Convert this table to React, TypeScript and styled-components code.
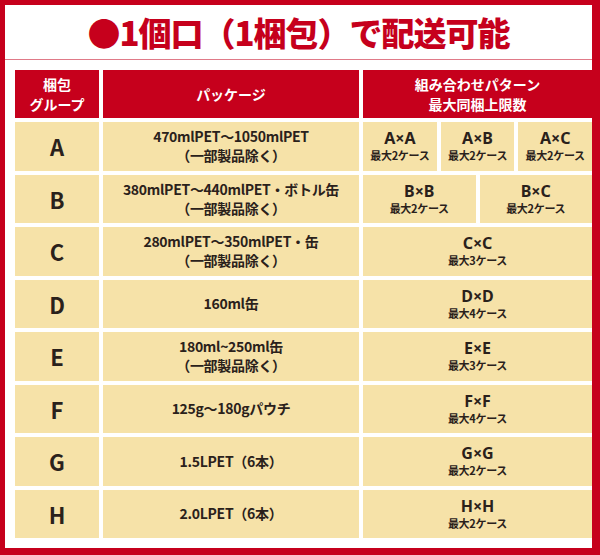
import React from 'react';
import styled, { createGlobalStyle } from 'styled-components';

interface Pattern {
  pair: string;
  limit: string;
}

interface Row {
  group: string;
  lines: string[];
  patterns: Pattern[];
}

const RED = '#c6001c';
const BEIGE = '#f6e2a8';
const INK = '#2a211b';

const rows: Row[] = [
  {
    group: 'A',
    lines: ['470mlPET〜1050mlPET', '（一部製品除く）'],
    patterns: [
      { pair: 'A×A', limit: '最大2ケース' },
      { pair: 'A×B', limit: '最大2ケース' },
      { pair: 'A×C', limit: '最大2ケース' },
    ],
  },
  {
    group: 'B',
    lines: ['380mlPET〜440mlPET・ボトル缶', '（一部製品除く）'],
    patterns: [
      { pair: 'B×B', limit: '最大2ケース' },
      { pair: 'B×C', limit: '最大2ケース' },
    ],
  },
  {
    group: 'C',
    lines: ['280mlPET〜350mlPET・缶', '（一部製品除く）'],
    patterns: [{ pair: 'C×C', limit: '最大3ケース' }],
  },
  { group: 'D', lines: ['160ml缶'], patterns: [{ pair: 'D×D', limit: '最大4ケース' }] },
  {
    group: 'E',
    lines: ['180ml~250ml缶', '（一部製品除く）'],
    patterns: [{ pair: 'E×E', limit: '最大3ケース' }],
  },
  { group: 'F', lines: ['125g〜180gパウチ'], patterns: [{ pair: 'F×F', limit: '最大4ケース' }] },
  { group: 'G', lines: ['1.5LPET（6本）'], patterns: [{ pair: 'G×G', limit: '最大2ケース' }] },
  { group: 'H', lines: ['2.0LPET（6本）'], patterns: [{ pair: 'H×H', limit: '最大2ケース' }] },
];

const GlobalStyle = createGlobalStyle`
  html, body {
    margin: 0;
    padding: 0;
    background: #ffffff;
  }
  body {
    font-family: "Noto Sans CJK JP", "Noto Sans", sans-serif;
  }
`;

const Frame = styled.div`
  box-sizing: border-box;
  width: 600px;
  height: 555px;
  border-style: solid;
  border-color: ${RED};
  border-width: 5px 8px 7px 5px;
  background: #ffffff;
  display: flex;
  flex-direction: column;
`;

const TitleBar = styled.div`
  height: 54px;
  border-bottom: 1px solid #e07a88;
  display: flex;
  align-items: center;
  justify-content: center;
`;

const Title = styled.h1`
  margin: 0;
  font-size: 33px;
  font-weight: 900;
  color: ${RED};
  letter-spacing: -1px;
  line-height: 1;
`;

const Table = styled.div`
  flex: 1;
  margin: 10px 0 10px 10px;
  display: grid;
  grid-template-columns: 84px 256px 1fr;
  grid-template-rows: 48px repeat(8, 1fr);
  gap: 4px;
`;

const HeadCell = styled.div`
  background: ${RED};
  color: #ffffff;
  font-size: 14px;
  font-weight: 700;
  line-height: 20px;
  display: flex;
  flex-direction: column;
  align-items: center;
  justify-content: center;
  text-align: center;
`;

const BodyCell = styled.div`
  background: ${BEIGE};
  color: ${INK};
  font-weight: 700;
  display: flex;
  flex-direction: column;
  align-items: center;
  justify-content: center;
  text-align: center;
`;

const GroupCell = styled(BodyCell)`
  font-size: 22px;
`;

const PackageCell = styled(BodyCell)`
  font-size: 14px;
  line-height: 19px;
  letter-spacing: -0.3px;
`;

const PatternCell = styled.div`
  display: flex;
  gap: 4px;
`;

const PatternItem = styled(BodyCell)`
  flex: 1;
`;

const Pair = styled.div`
  font-family: "Noto Sans", "Noto Sans CJK JP", sans-serif;
  font-size: 16px;
  line-height: 19px;
`;

const Limit = styled.div`
  font-size: 11px;
  line-height: 15px;
  letter-spacing: -0.3px;
`;

export default function App() {
  return (
    <>
      <GlobalStyle />
      <Frame>
        <TitleBar>
          <Title>●1個口（1梱包）で配送可能</Title>
        </TitleBar>
        <Table>
          <HeadCell>
            <span>梱包</span>
            <span>グループ</span>
          </HeadCell>
          <HeadCell>パッケージ</HeadCell>
          <HeadCell>
            <span>組み合わせパターン</span>
            <span>最大同梱上限数</span>
          </HeadCell>
          {rows.map(row => (
            <React.Fragment key={row.group}>
              <GroupCell>{row.group}</GroupCell>
              <PackageCell>
                {row.lines.map(line => (
                  <span key={line}>{line}</span>
                ))}
              </PackageCell>
              <PatternCell>
                {row.patterns.map(p => (
                  <PatternItem key={p.pair}>
                    <Pair>{p.pair}</Pair>
                    <Limit>{p.limit}</Limit>
                  </PatternItem>
                ))}
              </PatternCell>
            </React.Fragment>
          ))}
        </Table>
      </Frame>
    </>
  );
}
